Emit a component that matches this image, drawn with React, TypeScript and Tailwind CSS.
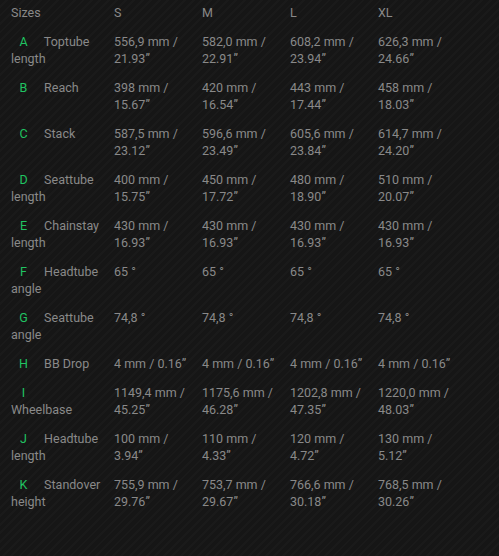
import React from 'react';

type Row = {
  letter: string;
  name: string;
  values: string[];
};

const sizes = ['S', 'M', 'L', 'XL'];

const rows: Row[] = [
  { letter: 'A', name: 'Toptube length', values: ['556,9 mm / 21.93"', '582,0 mm / 22.91"', '608,2 mm / 23.94"', '626,3 mm / 24.66"'] },
  { letter: 'B', name: 'Reach', values: ['398 mm / 15.67"', '420 mm / 16.54"', '443 mm / 17.44"', '458 mm / 18.03"'] },
  { letter: 'C', name: 'Stack', values: ['587,5 mm / 23.12"', '596,6 mm / 23.49"', '605,6 mm / 23.84"', '614,7 mm / 24.20"'] },
  { letter: 'D', name: 'Seattube length', values: ['400 mm / 15.75"', '450 mm / 17.72"', '480 mm / 18.90"', '510 mm / 20.07"'] },
  { letter: 'E', name: 'Chainstay length', values: ['430 mm / 16.93"', '430 mm / 16.93"', '430 mm / 16.93"', '430 mm / 16.93"'] },
  { letter: 'F', name: 'Headtube angle', values: ['65 °', '65 °', '65 °', '65 °'] },
  { letter: 'G', name: 'Seattube angle', values: ['74,8 °', '74,8 °', '74,8 °', '74,8 °'] },
  { letter: 'H', name: 'BB Drop', values: ['4 mm / 0.16"', '4 mm / 0.16"', '4 mm / 0.16"', '4 mm / 0.16"'] },
  { letter: 'I', name: 'Wheelbase', values: ['1149,4 mm / 45.25"', '1175,6 mm / 46.28"', '1202,8 mm / 47.35"', '1220,0 mm / 48.03"'] },
  { letter: 'J', name: 'Headtube length', values: ['100 mm / 3.94"', '110 mm / 4.33"', '120 mm / 4.72"', '130 mm / 5.12"'] },
  { letter: 'K', name: 'Standover height', values: ['755,9 mm / 29.76"', '753,7 mm / 29.67"', '766,6 mm / 30.18"', '768,5 mm / 30.26"'] },
];

export default function App() {
  return (
    <div className="min-h-[556px] w-[499px] bg-[repeating-linear-gradient(135deg,#161616_0px,#161616_4px,#1a1a1a_4px,#1a1a1a_6px)] font-['Roboto',sans-serif] text-[12.5px] leading-[17px] text-[#898989]">
      <table className="w-[467px] table-fixed border-collapse">
        <thead>
          <tr>
            <th className="w-[114px] pl-[11px] pr-[12px] pt-[4px] pb-[6px] text-left align-top font-normal">Sizes</th>
            {sizes.map((s, i) => (
              <th
                key={s}
                className={`${i === 3 ? 'w-[89px]' : 'w-[88px]'} pr-[11px] pt-[4px] pb-[6px] text-left align-top font-normal`}
              >
                {s}
              </th>
            ))}
          </tr>
        </thead>
        <tbody>
          {rows.map((row) => (
            <tr key={row.letter}>
              <td className="pl-[11px] pr-[12px] py-[6px] align-top">
                <span className="mr-[5px] inline-block w-[25px] text-center text-[#20c462]">{row.letter}</span>{' '}
                {row.name}
              </td>
              {row.values.map((v, i) => (
                <td key={i} className="pr-[11px] py-[6px] align-top">
                  {v.replace('"', '\u201d')}
                </td>
              ))}
            </tr>
          ))}
        </tbody>
      </table>
    </div>
  );
}
